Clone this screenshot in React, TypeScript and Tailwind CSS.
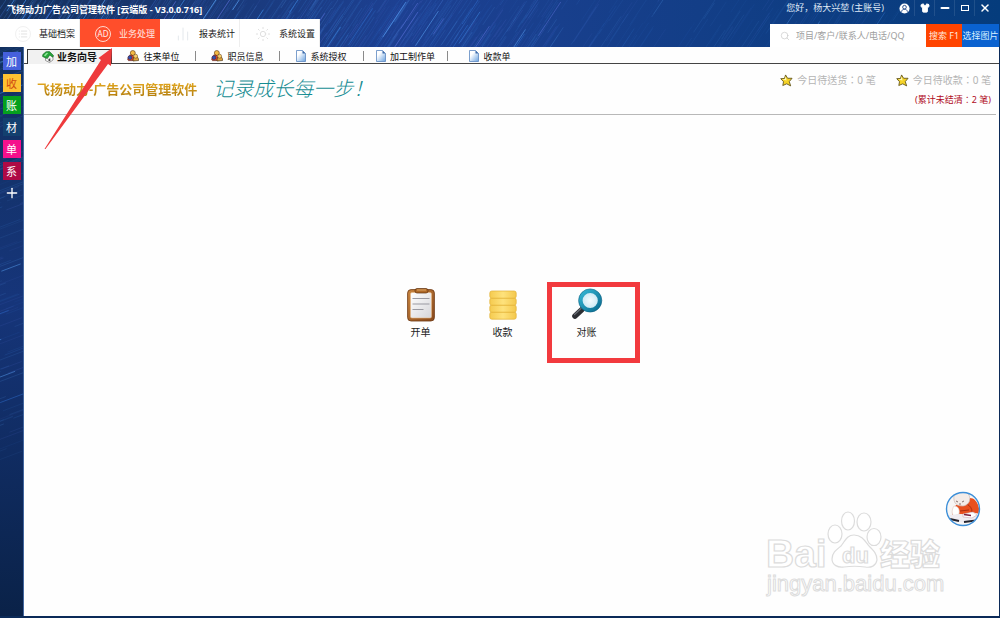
import { Search, Plus, Shirt, Minus, X, List, Sun, BarChart2 } from 'lucide-react';
import type { ReactNode } from 'react';

interface Streak {
  x: number;
  y: number;
  length: number;
  width: number;
  opacity: number;
  color: string;
}

const STREAK_COLORS = ['#3f8be6', '#5b70d8', '#2f6fd0', '#5aa4f6'];

// star trails for the skin background, always the same for a given seed
function makeStreaks(count: number, maxX: number, maxY: number, seed: number): Streak[] {
  let s = seed;
  const next = () => {
    s = (s * 16807) % 2147483647;
    return s / 2147483647;
  };
  return Array.from({ length: count }, () => {
    const strong = next() > 0.93;
    return {
      x: next() * maxX,
      y: next() * maxY - 14,
      length: 16 + next() * 36,
      width: strong ? 1 : 0.6,
      opacity: strong ? 0.8 : 0.15 + next() * 0.3,
      color: STREAK_COLORS[Math.floor(next() * STREAK_COLORS.length)],
    };
  });
}

const headerStreaks = [...makeStreaks(420, 560, 52, 4711), ...makeStreaks(260, 920, 52, 812)];
const sideStreaks = makeStreaks(110, 36, 420, 97);

const sideItems = [
  { label: '加', className: 'bg-[#4560dc] text-white' },
  { label: '收', className: 'bg-[#fdc232] text-[#d04a10]' },
  { label: '账', className: 'bg-[#05a01e] text-white' },
  { label: '材', className: 'bg-[#13406f] text-white' },
  { label: '单', className: 'bg-[#f5108c] text-white' },
  { label: '系', className: 'bg-[#ae0a45] text-white' },
];

function HouseIcon() {
  return (
    <svg viewBox="0 0 12 12" className="size-3 shrink-0">
      <path d="M3.500 6v3.500l4 2 3.500-2.500V5L8 3z" fill="#f6f6f6" stroke="#666" strokeWidth=".6" />
      <path d="M.6 5.500.8 3.500 4 .8 7.500.6l4 4-.8 1.600-3-2.200-2.400 3.600-2-.8z" fill="#27a53a" stroke="#0d5c1c" strokeWidth=".6" />
      <path d="M1.800 4.600 4.500 1.800 6.300 2 3.500 5.300z" fill="#8be595" />
      <path d="M6.500 8l1.800-.8v3.300l-1.800-.6z" fill="#444" />
    </svg>
  );
}

function PeopleIcon() {
  return (
    <svg viewBox="0 0 12 12" className="size-3 shrink-0">
      <circle cx="5.800" cy="3" r="2.500" fill="#f3b944" stroke="#5a3510" strokeWidth=".6" />
      <path d="M.8 10c0-3.500 1-5 3.200-5s3.400 2 3.400 5.600H1.500z" fill="#d4472c" stroke="#4a1410" strokeWidth=".6" />
      <path d="M6 11c0-3 .8-4.500 2.700-4.500s2.900 1.500 2.900 4z" fill="#e0a43c" stroke="#3c2a10" strokeWidth=".6" />
      <circle cx="8.600" cy="6.200" r="2" fill="#f7cf6a" stroke="#5a3510" strokeWidth=".5" />
      <circle cx="3" cy="7.600" r="1.900" fill="#3350b0" stroke="#16205a" strokeWidth=".4" />
    </svg>
  );
}

function PageIcon() {
  return (
    <svg viewBox="0 0 10 12" className="h-3 w-2.5 shrink-0">
      <defs>
        <linearGradient id="page" x1="0" y1="0" x2="1" y2="1">
          <stop offset=".3" stopColor="#fff" />
          <stop offset="1" stopColor="#6aa2e0" />
        </linearGradient>
      </defs>
      <path d="M.5.500h6L9.500 3.500v8h-9z" fill="url(#page)" stroke="#5a86c0" strokeWidth=".8" />
      <path d="M6.500.500v3h3z" fill="#3d6aa8" />
    </svg>
  );
}

function StarIcon() {
  return (
    <svg viewBox="0 0 14 14" className="size-[13px] shrink-0">
      <path
        d="M6 1 8.200 4.600 13 4.600 10 8.200 11.500 12.800 7.200 10.600 3 12.400 3.800 8.300.800 5 4.800 4.800z"
        fill="#f5d327"
        stroke="#5a4d14"
        strokeWidth=".9"
        strokeLinejoin="round"
      />
      <path d="M6.200 2.500 7 7 2.500 5.800l2.800-.4z" fill="#fff8b8" />
    </svg>
  );
}

function ClipboardIcon() {
  return (
    <svg viewBox="0 0 28 34" className="h-[34px] w-7">
      <defs>
        <linearGradient id="board" x1="0" y1="0" x2="1" y2="1">
          <stop offset="0" stopColor="#c9853f" />
          <stop offset="1" stopColor="#8a4a1c" />
        </linearGradient>
        <linearGradient id="sheet" x1="0" y1="0" x2="1" y2="1">
          <stop offset="0" stopColor="#fff" />
          <stop offset="1" stopColor="#d6d6da" />
        </linearGradient>
      </defs>
      <rect x=".6" y="1.600" width="26.800" height="31.400" rx="3.500" fill="url(#board)" stroke="#6b3510" strokeWidth=".8" />
      <rect x="3.500" y="4.500" width="21" height="25.500" rx="1.500" fill="url(#sheet)" stroke="#e8b884" strokeWidth=".6" />
      <rect x="8" y=".5" width="13" height="4.500" rx="2" fill="#b06a28" stroke="#5d2f0e" strokeWidth=".7" />
      <path d="M10 2h9" stroke="#e9b87a" strokeWidth=".8" />
      <path d="M5.500 10.500h17M5.500 16h17M5.500 21.500h11" stroke="#9a9aa2" strokeWidth="1.200" />
    </svg>
  );
}

function CoinsIcon() {
  return (
    <svg viewBox="0 0 28 34" className="h-[34px] w-7">
      <defs>
        <linearGradient id="coin" x1="0" y1="0" x2="1" y2="0">
          <stop offset="0" stopColor="#f5cb50" />
          <stop offset=".5" stopColor="#fee27c" />
          <stop offset="1" stopColor="#f4c84c" />
        </linearGradient>
      </defs>
      {[24, 17, 10, 3].map((y) => (
        <rect key={y} x=".8" y={y} width="26.400" height="7.200" rx="2" fill="url(#coin)" stroke="#e2b136" strokeWidth=".7" />
      ))}
    </svg>
  );
}

function MagnifierIcon() {
  return (
    <svg viewBox="0 0 32 34" className="h-[34px] w-8">
      <defs>
        <linearGradient id="ring" x1="0" y1="0" x2="1" y2="1">
          <stop offset="0" stopColor="#35b6d4" />
          <stop offset="1" stopColor="#0b6d92" />
        </linearGradient>
        <radialGradient id="glass">
          <stop offset="0" stopColor="#f4fbfe" />
          <stop offset="1" stopColor="#c4e5f2" />
        </radialGradient>
      </defs>
      <path d="M4 28 11 21.500" stroke="#2c2e33" strokeWidth="5.600" strokeLinecap="round" />
      <path d="M3.500 26.500 10 20.500" stroke="#6a6d74" strokeWidth="1.200" strokeLinecap="round" />
      <circle cx="19.200" cy="12.500" r="9.600" fill="url(#glass)" stroke="url(#ring)" strokeWidth="4" />
      <circle cx="19.200" cy="12.500" r="11.600" fill="none" stroke="#0d5f80" strokeWidth=".6" />
    </svg>
  );
}

const tabs: { label: string; icon: ReactNode }[] = [
  { label: '往来单位', icon: <PeopleIcon /> },
  { label: '职员信息', icon: <PeopleIcon /> },
  { label: '系统授权', icon: <PageIcon /> },
  { label: '加工制作单', icon: <PageIcon /> },
  { label: '收款单', icon: <PageIcon /> },
];

const navItems: { label: string; icon: ReactNode; active?: boolean }[] = [
  {
    label: '基础档案',
    icon: (
      <span className="flex size-4 items-center justify-center rounded-full border border-[#f1f1f1]">
        <List className="size-2.5 text-[#dcdcdc]" strokeWidth={2} />
      </span>
    ),
  },
  {
    label: '业务处理',
    icon: (
      <span className="flex size-4 items-center justify-center rounded-full border border-[#ffd9cf] text-[8px] leading-none text-[#fff1ec]">
        AD
      </span>
    ),
    active: true,
  },
  { label: '报表统计', icon: <BarChart2 className="size-4 text-[#e4e8ec]" strokeWidth={1.500} /> },
  { label: '系统设置', icon: <Sun className="size-4 text-[#e0e0e0]" strokeWidth={1.500} /> },
];

function Header() {
  return (
    <header className="relative flex h-[47px] shrink-0 justify-between overflow-hidden bg-linear-to-r from-[#15305c] via-[#1d4092] via-40% to-[#053c7c] text-[9px]">
      <svg className="absolute inset-0 h-full w-full" aria-hidden="true">
        {headerStreaks.map((s, i) => (
          <line
            key={i}
            x1={s.x}
            y1={s.y}
            x2={s.x - s.length * 0.55}
            y2={s.y + s.length * 0.83}
            stroke={s.color}
            strokeWidth={s.width}
            opacity={s.opacity * (1 - s.x / 1400)}
          />
        ))}
      </svg>

      <div className="relative flex flex-col justify-between">
        <h1 className="pt-px pl-[7px] leading-[18px] font-bold whitespace-nowrap text-white">
          飞扬动力广告公司管理软件 [云端版 - V3.0.0.716]
        </h1>
        <nav className="flex h-7">
          {navItems.map((item) => (
            <button
              key={item.label}
              type="button"
              className={
                item.active
                  ? 'flex w-20 items-center gap-2 bg-[#ff4e2b] pt-px pl-[15px] whitespace-nowrap text-[#ffe9e2]'
                  : 'flex w-20 items-center gap-2 border-r border-[#eeeeee] bg-white pt-px pl-[15px] whitespace-nowrap text-[#222222]'
              }
            >
              {item.icon}
              {item.label}
            </button>
          ))}
        </nav>
      </div>

      <div className="relative flex flex-col items-end justify-between pr-px">
        <div className="flex h-4 items-center pr-[5px] text-white">
          <span className="pr-2.5 whitespace-nowrap text-[#dfe8f6]">您好，杨大兴堃 (主账号)</span>
          <button type="button" aria-label="账号" className="flex h-4 w-5 items-center justify-center">
            <svg viewBox="0 0 12 12" className="size-[11px]">
              <circle cx="6" cy="6" r="5.500" fill="#fff" />
              <circle cx="6" cy="4.600" r="2" fill="none" stroke="#1c4487" strokeWidth="1" />
              <path d="M2.800 9.500c.4-2 1.500-2.700 3.200-2.700s2.800.7 3.200 2.700" fill="none" stroke="#1c4487" strokeWidth="1" />
            </svg>
          </button>
          <button type="button" aria-label="皮肤" className="flex h-4 w-5 items-center justify-center border-l border-white/10">
            <Shirt className="size-2.5 fill-white" />
          </button>
          <button type="button" aria-label="最小化" className="flex h-4 w-5 items-center justify-center border-l border-white/10">
            <Minus className="size-3" strokeWidth={4} />
          </button>
          <button type="button" aria-label="最大化" className="flex h-4 w-5 items-center justify-center border-l border-white/10">
            <span className="h-1.5 w-2 border border-white" />
          </button>
          <button type="button" aria-label="关闭" className="flex h-4 w-5 items-center justify-center border-l border-white/10">
            <X className="size-3" strokeWidth={3} />
          </button>
        </div>
        <form className="flex h-[23px]">
          <label className="flex w-[156px] items-center gap-1.5 bg-white pl-2.5">
            <Search className="size-2.5 shrink-0 text-[#c4c4c4]" strokeWidth={1.500} />
            <input
              type="text"
              aria-label="搜索"
              placeholder="项目/客户/联系人/电话/QQ"
              className="w-full min-w-0 bg-transparent outline-none placeholder:text-[#a0a0a0]"
            />
          </label>
          <button type="button" className="w-9 bg-[#ff4400] whitespace-nowrap text-[#ffe8d8]">
            搜索 F1
          </button>
          <button type="button" className="w-[37px] bg-[#0a62d0] whitespace-nowrap text-[#d8f0ff]">
            选择图片
          </button>
        </form>
      </div>
    </header>
  );
}

function Sidebar() {
  return (
    <aside className="relative flex w-6 shrink-0 flex-col items-center gap-1 overflow-hidden border-r border-[#4468a0] bg-linear-to-b from-[#12305f] via-[#16357a] via-45% to-[#0a2248] pt-[5px] text-[11px]">
      <svg className="absolute inset-0 h-full w-full" aria-hidden="true">
        {sideStreaks.map((s, i) => (
          <line
            key={i}
            x1={s.x}
            y1={s.y}
            x2={s.x - s.length * 0.9}
            y2={s.y + s.length * 0.34}
            stroke={s.color}
            strokeWidth={s.width}
            opacity={s.opacity * 0.6}
          />
        ))}
      </svg>
      {sideItems.map((item) => (
        <button
          key={item.label}
          type="button"
          className={`relative flex size-[18px] items-center justify-center leading-none ${item.className}`}
        >
          {item.label}
        </button>
      ))}
      <button type="button" aria-label="添加" className="relative flex size-[18px] items-center justify-center text-white">
        <Plus className="size-4" strokeWidth={2} />
      </button>
    </aside>
  );
}

function Tabs() {
  return (
    <div role="tablist" className="flex h-[17px] shrink-0 pt-0.5 text-[9px] text-[#111111]">
      <span className="w-[3px] border-b border-[#444444]" />
      <button
        type="button"
        role="tab"
        aria-selected="true"
        className="flex w-[85px] items-center justify-center gap-[3px] border-x border-t border-[#333333] bg-[#f1f1f1] text-[10px] leading-none font-bold whitespace-nowrap"
      >
        <HouseIcon />
        业务向导
      </button>
      {tabs.map((tab, i) => (
        <button
          key={tab.label}
          type="button"
          role="tab"
          aria-selected="false"
          className="flex w-[84px] items-center border-b border-[#444444] leading-none whitespace-nowrap"
        >
          <span className="flex flex-1 items-center justify-center gap-1">
            {tab.icon}
            {tab.label}
          </span>
          {i < tabs.length - 1 && <span className="h-2.5 w-px bg-[#8a8a8a]" />}
        </button>
      ))}
      <span className="flex-1 border-b border-[#444444]" />
    </div>
  );
}

function Banner() {
  return (
    <div className="mr-[3px] flex h-[51px] shrink-0 items-center border-b border-[#b8b8b8] pl-[13px]">
      <p className="bg-linear-to-b from-[#efb224] to-[#ab770a] bg-clip-text text-[13px] leading-5 font-bold whitespace-nowrap text-transparent">
        飞扬动力-广告公司管理软件
      </p>
      <p className="pl-4 text-[20px] leading-5 font-light whitespace-nowrap text-[#148c92] italic">记录成长每一步！</p>
      <div className="ml-auto flex flex-col items-end gap-1 pt-0.5 pr-[5px] font-['Noto_Sans','Noto_Sans_CJK_TC',sans-serif] whitespace-nowrap">
        <div className="flex gap-5 text-[10px] leading-4 text-[#b4b4b4]">
          <span className="flex items-center gap-1">
            <StarIcon />
            今日待送货：0 笔
          </span>
          <span className="flex items-center gap-1">
            <StarIcon />
            今日待收款：0 笔
          </span>
        </div>
        <p className="text-[9px] leading-4 text-[#b00c1c]">(累计未结清：2 笔)</p>
      </div>
    </div>
  );
}

function Shortcuts() {
  return (
    <div className="flex justify-center pt-[173px] pr-3.5 text-[10px] text-[#222222]">
      <button type="button" className="flex w-[82px] flex-col items-center gap-0.5">
        <ClipboardIcon />
        <span className="leading-4">开单</span>
      </button>
      <button type="button" className="flex w-[82px] flex-col items-center gap-0.5">
        <CoinsIcon />
        <span className="leading-4">收款</span>
      </button>
      <button type="button" className="relative flex w-[86px] flex-col items-center gap-0.5">
        <MagnifierIcon />
        <span className="leading-4">对账</span>
        {/* highlight frame */}
        <span className="absolute -top-1.5 left-[3px] h-[81px] w-[93px] border-5 border-[#f23a3e]" />
      </button>
    </div>
  );
}

function Avatar() {
  return (
    <svg viewBox="0 0 36 36" className="absolute right-[18px] bottom-[89px] size-9">
      <defs>
        <clipPath id="avatar">
          <circle cx="18" cy="18" r="16" />
        </clipPath>
      </defs>
      <circle cx="18" cy="18" r="16.500" fill="#f8f6f5" />
      <g clipPath="url(#avatar)">
        <path d="M8 19l3-5 9 0 5-7c5 0 9 5 10 16l-9-2-5 3-9-1-5 2z" fill="#e8501f" />
        <path d="M22 13c3 2 5 4 5 8M15 20l9-1" fill="none" stroke="#a92f12" strokeWidth="1" />
        <path d="M9 4c4-4 13-4 15 0 2 5 0 10-6 11-6 0-10-2-9-11z" fill="#f4ece8" stroke="#cdbdb8" strokeWidth=".7" />
        <path d="M11 10l2 1M17 11l2-1M14 13h2" stroke="#7a6460" strokeWidth=".9" />
        <path d="M9 15c4 0 6 3 5 8l-5 2c-3-2-2-7 0-10z" fill="#fff" stroke="#ddc8c0" strokeWidth=".6" />
        <path d="M4 24l12-1 18 1v5l-14 3-14-3z" fill="#f0ecf1" />
        <path d="M18 23l10-2 4 3-5 3-9-1z" fill="#fff" stroke="#c9a9b4" strokeWidth=".6" />
        <path d="M5 28l9 2M19 31l12-1.500" stroke="#23232e" strokeWidth="1.800" />
        <path d="M19 23.500l7 1" stroke="#7a2040" strokeWidth="1.400" />
      </g>
      <circle cx="18" cy="18" r="16.500" fill="none" stroke="#3d8fd8" strokeWidth="1.400" />
    </svg>
  );
}

function Watermark() {
  return (
    <svg
      viewBox="0 0 184 90"
      className="absolute right-[50px] bottom-4 h-[90px] w-[184px] font-['Liberation_Sans','Noto_Sans_CJK_SC',sans-serif]"
      fill="#fff"
      stroke="#dcdcdc"
      strokeWidth="1.200"
    >
      <text x="1" y="57" className="text-[39px] font-bold">
        Bai
      </text>
      <ellipse cx="70" cy="24" rx="7" ry="9" />
      <ellipse cx="83" cy="11" rx="6.500" ry="9" />
      <ellipse cx="99" cy="12" rx="7" ry="9" />
      <ellipse cx="109" cy="27" rx="7" ry="8.500" />
      <path d="M89 25c8 0 11 6 15 11 5 5 8 8 8 14-1 6-6 8-12 7-7-1-14-1-21 0-6 1-12-2-12-8 0-6 4-9 9-13 4-5 6-11 13-11z" />
      <text x="77" y="53" className="text-[22px] font-bold">
        du
      </text>
      <text x="115" y="55" className="text-[30px] font-black">
        经验
      </text>
      <text x="2" y="81" strokeWidth="1" className="text-[22px]">
        jingyan.baidu.com
      </text>
    </svg>
  );
}

export default function App() {
  return (
    <div className="relative flex min-h-screen flex-col bg-[#0b2a58] font-['Noto_Sans','Noto_Sans_CJK_SC',sans-serif]">
      <Header />
      <div className="flex flex-1 pb-0.5">
        <Sidebar />
        <main className="relative mr-px flex min-w-0 flex-1 flex-col bg-[#fefefe]">
          <Tabs />
          <Banner />
          <Shortcuts />
          <Avatar />
          <Watermark />
        </main>
      </div>

      {/* pointer towards the active menu */}
      <svg viewBox="0 0 70 104" className="pointer-events-none absolute top-[47px] left-[43px] h-[104px] w-[70px]">
        <path d="M1.500 102 58 13 55.500 11 69 1 68 19 65 17 2.500 102z" fill="#ee3a3c" />
      </svg>
    </div>
  );
}
